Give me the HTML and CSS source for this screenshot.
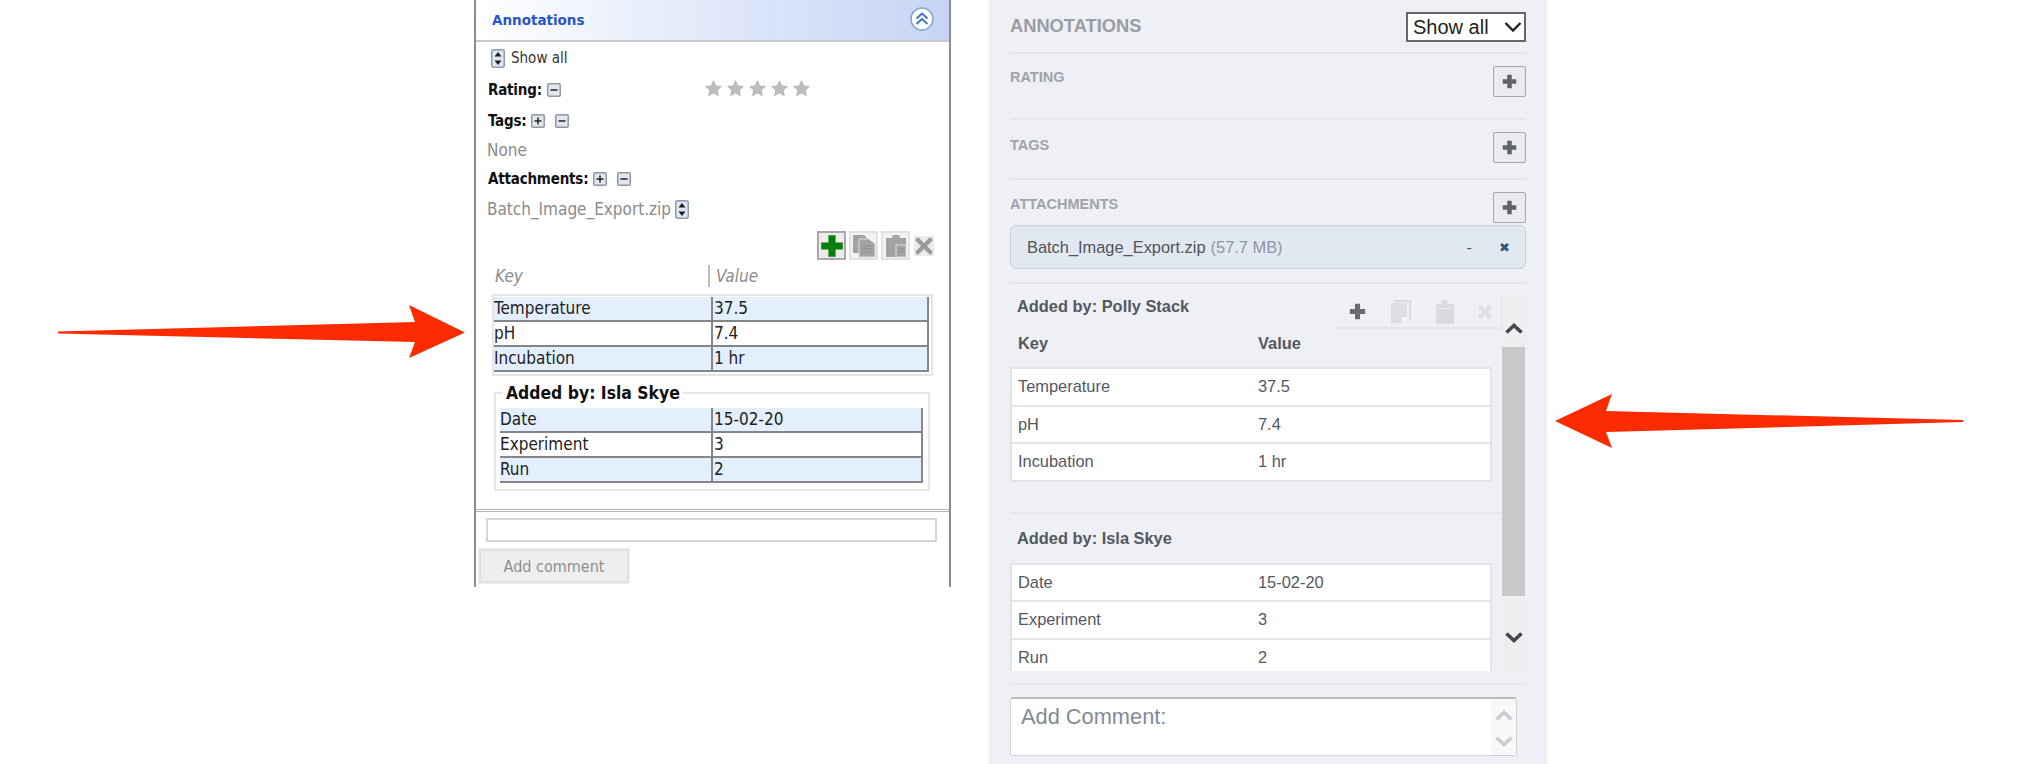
FILE: index.html
```html
<!DOCTYPE html>
<html lang="en">
<head>
  <meta charset="UTF-8" />
  <title>Annotations comparison</title>
  <link rel="stylesheet" href="styles.css">
</head>
<body>
  <svg class="sprite" aria-hidden="true">
    <symbol id="spin" viewBox="0 0 14 19">
      <rect x="0.75" y="0.75" width="12.5" height="17.5" rx="2" fill="#dfe6f0" stroke="#8d9bb0" stroke-width="1.5"/>
      <path d="M7 3l3.5 4.5h-7zM7 16l-3.5-4.5h7z" fill="#1c1c1c"/>
    </symbol>
    <symbol id="box-plus" viewBox="0 0 14 14">
      <rect x="0.75" y="0.75" width="12.5" height="12.5" rx="1.5" fill="#e3e6ec" stroke="#8d97a5" stroke-width="1.5"/>
      <path d="M3.5 7h7M7 3.5v7" stroke="#222" stroke-width="1.5"/>
    </symbol>
    <symbol id="box-minus" viewBox="0 0 14 14">
      <rect x="0.75" y="0.75" width="12.5" height="12.5" rx="1.5" fill="#e3e6ec" stroke="#8d97a5" stroke-width="1.5"/>
      <path d="M3.5 7h7" stroke="#222" stroke-width="1.5"/>
    </symbol>
    <symbol id="star" viewBox="0 0 24 24">
      <path d="M12 1l3.3 7.3 7.700.8-5.800 5.200 1.700 7.800L12 18.100l-6.900 4 1.700-7.800L1 9.100l7.700-.8z" fill="#bdbdbd" stroke="#a9a9a9"/>
    </symbol>
    <symbol id="fat-plus" viewBox="0 0 20 20">
      <path d="M7 1h6v6h6v6h-6v6H7v-6H1V7h6z"/>
    </symbol>
    <symbol id="fat-x" viewBox="0 0 20 20">
      <path d="M4 1l6 6 6-6 3 3-6 6 6 6-3 3-6-6-6 6-3-3 6-6-6-6z"/>
    </symbol>
    <symbol id="docs" viewBox="0 0 24 24">
      <path d="M1 1h11l4 4v14H1z" fill="#a3a3a3"/>
      <path d="M7 5h10l6 5v13H7z" fill="#a3a3a3" stroke="#dcdcdc"/>
      <path d="M10 12h10M10 15h10M10 18h10" stroke="#8c8c8c"/>
    </symbol>
    <symbol id="clip" viewBox="0 0 24 24">
      <path d="M2 4h6l1-3h6l1 3h6v19H2z" fill="#a3a3a3"/>
      <path d="M12 11h10v12H12z" fill="#a3a3a3" stroke="#dcdcdc"/>
      <path d="M14 15h6M14 18h6" stroke="#8c8c8c"/>
    </symbol>
    <symbol id="chev-up" viewBox="0 0 18 12">
      <path d="M1.500 10.500L9 3.500l7.500 7" fill="none" stroke="currentColor" stroke-width="3.600"/>
    </symbol>
    <symbol id="chev-down" viewBox="0 0 18 12">
      <path d="M1.500 1.500L9 8.500l7.500-7" fill="none" stroke="currentColor" stroke-width="3.600"/>
    </symbol>
  </svg>

  <section class="old-panel">
    <header class="old-head">
      <span class="old-title">Annotations</span>
      <span class="collapse">
        <svg viewBox="0 0 24 24" width="24" height="24">
          <circle cx="12" cy="12" r="11" fill="#fff" stroke="#8aa3cc" stroke-width="1.500"/>
          <path d="M6.500 11.500L12 6.500l5.500 5M6.500 17L12 12l5.500 5" fill="none" stroke="#3f6fc0" stroke-width="1.800"/>
        </svg>
      </span>
    </header>

    <div class="old-row old-show"><svg class="spin"><use href="#spin"/></svg><span>Show all</span></div>
    <div class="old-row old-rating">
      <div class="old-label"><b>Rating:</b><svg class="mini"><use href="#box-minus"/></svg></div>
      <div class="stars">
        <svg><use href="#star"/></svg><svg><use href="#star"/></svg><svg><use href="#star"/></svg><svg><use href="#star"/></svg><svg><use href="#star"/></svg>
      </div>
    </div>
    <div class="old-row old-tags old-label"><b>Tags:</b><svg class="mini"><use href="#box-plus"/></svg><svg class="mini"><use href="#box-minus"/></svg></div>
    <div class="old-row old-none">None</div>
    <div class="old-row old-att old-label"><b>Attachments:</b><svg class="mini"><use href="#box-plus"/></svg><svg class="mini"><use href="#box-minus"/></svg></div>
    <div class="old-row old-file">Batch_Image_Export.zip<svg class="spin"><use href="#spin"/></svg></div>

    <div class="old-tools">
      <span class="old-tool active"><svg><use href="#fat-plus"/></svg></span>
      <span class="old-tool"><svg><use href="#docs"/></svg></span>
      <span class="old-tool"><svg><use href="#clip"/></svg></span>
      <span class="old-tool plain"><svg><use href="#fat-x"/></svg></span>
    </div>

    <div class="old-cols"><span class="col-key">Key</span><span class="col-val">Value</span></div>

    <div class="old-frame">
      <table class="old-table">
        <tr><td>Temperature</td><td>37.5</td></tr>
        <tr><td>pH</td><td>7.4</td></tr>
        <tr><td>Incubation</td><td>1 hr</td></tr>
      </table>
    </div>

    <fieldset class="old-field">
      <legend>Added by: Isla Skye</legend>
      <table class="old-table">
        <tr><td>Date</td><td>15-02-20</td></tr>
        <tr><td>Experiment</td><td>3</td></tr>
        <tr><td>Run</td><td>2</td></tr>
      </table>
    </fieldset>

    <div class="old-rule"></div>
    <input class="old-input" type="text" />
    <button class="old-btn" type="button">Add comment</button>
  </section>

  <section class="new-panel">
    <header class="new-head">
      <h2>Annotations</h2>
      <div class="fake-select">Show all<svg width="18" height="12" viewBox="0 0 18 12"><path d="M1.500 2L9 9.500 16.500 2" fill="none" stroke="#222" stroke-width="2.400"/></svg></div>
    </header>

    <div class="new-sec sec-rating">
      <h3>Rating</h3>
      <button class="plus-btn" type="button"><svg><use href="#fat-plus"/></svg></button>
    </div>
    <div class="new-sec sec-tags">
      <h3>Tags</h3>
      <button class="plus-btn" type="button"><svg><use href="#fat-plus"/></svg></button>
    </div>
    <div class="new-sec sec-att">
      <div class="att-top">
        <h3>Attachments</h3>
        <button class="plus-btn" type="button"><svg><use href="#fat-plus"/></svg></button>
      </div>
      <div class="chip">
        <span class="chip-name">Batch_Image_Export.zip</span>
        <span class="chip-size">(57.7 MB)</span>
        <span class="chip-min">-</span>
        <span class="chip-del">&#10006;</span>
      </div>
    </div>

    <div class="scroller">
      <div class="scroll-body">
        <div class="group-head">
          <h4>Added by: Polly Stack</h4>
          <div class="new-tools">
            <svg class="t-plus"><use href="#fat-plus"/></svg>
            <svg class="t-doc" viewBox="0 0 20 24"><path d="M3 0h17v20h-2V2H3z" fill="#d9dbdf"/><path d="M0 3h16v14l-5 6H0z" fill="#dcdee2"/><path d="M11 23l5-6h-5z" fill="#f6f7f9"/></svg>
            <svg class="t-clip" viewBox="0 0 18 24"><path d="M0 4h5l2-4h4l2 4h5v20H0z" fill="#d9dbdf"/><path d="M2 8h14v1H2z" fill="#eceef1"/></svg>
            <svg class="t-x"><use href="#fat-x"/></svg>
          </div>
        </div>
        <div class="kv-cols"><span>Key</span><span>Value</span></div>
        <table class="kv-table">
          <tr><td>Temperature</td><td>37.5</td></tr>
          <tr><td>pH</td><td>7.4</td></tr>
          <tr><td>Incubation</td><td>1 hr</td></tr>
        </table>
        <div class="group-rule"></div>
        <h4 class="group-two">Added by: Isla Skye</h4>
        <table class="kv-table cut">
          <tr><td>Date</td><td>15-02-20</td></tr>
          <tr><td>Experiment</td><td>3</td></tr>
          <tr><td>Run</td><td>2</td></tr>
        </table>
      </div>
      <div class="scrollbar">
        <svg class="bar-up"><use href="#chev-up"/></svg>
        <div class="thumb"></div>
        <svg class="bar-down"><use href="#chev-down"/></svg>
      </div>
    </div>

    <div class="comment-rule"></div>
    <div class="comment">
      <span class="comment-text">Add Comment:</span>
      <div class="comment-bar">
        <svg><use href="#chev-up"/></svg>
        <svg><use href="#chev-down"/></svg>
      </div>
    </div>
  </section>

  <!-- the two red arrows lie over the page -->
  <svg class="arrow arrow-left" viewBox="0 0 410 56"><path d="M0 26.500L357 17 351 0 407 27.500 351 53 357 37 0 28.500z"/></svg>
  <svg class="arrow arrow-right" viewBox="0 0 410 56"><path d="M408 26L51 17 57 0 0 27 57 54 51 38 408 28z"/></svg>
</body>
</html>
```

FILE: styles.css
```css
html, body {
  margin: 0;
  height: 764px;
  overflow: hidden;
  background: #fff;
}
body {
  display: flex;
  align-items: flex-start;
  padding-left: 474px;
  gap: 38px;
  position: relative;
}
.sprite {
  position: absolute;
  width: 0;
  height: 0;
}

/* left: old panel */
.old-panel {
  box-sizing: border-box;
  width: 477px;
  height: 587px;
  border-left: 2px solid #8b8b94;
  border-right: 2px solid #8b8b94;
  font-family: "DejaVu Sans", sans-serif;
  font-stretch: condensed;
  font-size: 17px;
  color: #333;
}
.old-head {
  height: 40px;
  border-bottom: 2px solid #c9c9c9;
  background: linear-gradient(to right, #fff 0%, #e6edfb 40%, #c6d5f5 100%);
  display: flex;
  align-items: center;
  justify-content: space-between;
  padding: 0 15px 0 16px;
}
.old-title {
  color: #2b55c4;
  font-weight: bold;
  font-size: 13.500px;
  font-stretch: normal;
}
.collapse {
  display: flex;
  margin-top: -2px;
}
.old-row {
  display: flex;
  align-items: center;
  padding-left: 11px;
}
.old-row b {
  color: #111;
  font-size: 15px;
  letter-spacing: -0.2px;
  padding-left: 1px;
}
.spin {
  width: 14px;
  height: 19px;
  flex: none;
}
.mini {
  width: 14px;
  height: 14px;
  flex: none;
}
.old-show {
  height: 32px;
  padding-left: 15px;
  gap: 6px;
  font-size: 15px;
}
.old-rating {
  height: 32px;
}
.old-label {
  display: flex;
  align-items: center;
  gap: 5px;
}
.old-rating .old-label {
  width: 218px;
}
.stars {
  display: flex;
  gap: 5px;
  margin-top: -4px;
}
.stars svg {
  width: 17px;
  height: 17px;
}
.old-tags {
  height: 30px;
}
.old-tags .mini + .mini,
.old-att .mini + .mini {
  margin-left: 5px;
}
.old-none {
  height: 28px;
  color: #8b8b8b;
}
.old-att {
  height: 30px;
}
.old-file {
  height: 30px;
  color: #8b8b8b;
  gap: 4px;
}
.old-tools {
  display: flex;
  justify-content: flex-end;
  align-items: center;
  gap: 3px;
  margin-top: 7px;
  padding-right: 15px;
  height: 29px;
}
.old-tool {
  box-sizing: border-box;
  width: 29px;
  height: 29px;
  border: 2px solid #e2e2e2;
  background: #f2f2f2;
  display: flex;
  align-items: center;
  justify-content: center;
  fill: #a0a0a0;
}
.old-tool svg {
  width: 24px;
  height: 24px;
}
.old-tool.active {
  border-color: #a9a9a9;
  background: #ececec;
  fill: #0b7d0b;
}
.old-tool.plain {
  border: 0;
  width: 20px;
  height: 20px;
  margin-left: 1px;
  background: #ececec;
  fill: #9a9a9a;
}
.old-tool.plain svg {
  width: 20px;
  height: 20px;
}
.old-cols {
  display: flex;
  align-items: center;
  height: 22px;
  margin-top: 5px;
  font-style: italic;
  color: #8b8b8b;
}
.col-key {
  box-sizing: border-box;
  width: 234px;
  padding-left: 19px;
  border-right: 2px solid #bbb;
  line-height: 22px;
}
.col-val {
  padding-left: 6px;
}
.old-frame {
  box-sizing: border-box;
  width: 441px;
  height: 82px;
  margin: 7px 0 0 16px;
  padding: 1px 2px 0 0;
  border: 2px solid #e6e6e6;
}
.old-table {
  border-collapse: collapse;
  width: 100%;
  font-size: 17px;
  color: #222;
  border-right: 2px solid #85858c;
}
.old-table td {
  padding: 0;
  height: 23px;
  line-height: 23px;
  border-bottom: 2px solid #85858c;
}
.old-table td:first-child {
  width: 217px;
  border-right: 2px solid #85858c;
}
.old-table td:last-child {
  padding-left: 1px;
}
.old-table tr:nth-child(odd) {
  background: #e3effd;
}
.old-field {
  box-sizing: border-box;
  width: 436px;
  height: 110px;
  margin: 5px 0 0 18px;
  padding: 3px 5px 0 4px;
  border: 2px solid #e6e6e6;
  min-width: 0;
}
.old-field legend {
  margin-left: 3px;
  padding: 0 3px;
  line-height: 24px;
  font-weight: bold;
  font-size: 17.400px;
  color: #111;
}
.old-field td:first-child {
  width: 211px;
}
.old-rule {
  height: 0;
  margin-top: 18px;
  border-top: 3px double #b5b5b5;
}
.old-input {
  box-sizing: border-box;
  display: block;
  width: 451px;
  height: 24px;
  margin: 6px 0 0 10px;
  border: 2px solid #d6d6d6;
  background: #fff;
}
.old-btn {
  box-sizing: border-box;
  display: block;
  width: 150px;
  height: 34px;
  margin: 7px 0 0 3px;
  border: 2px solid #e0e0e0;
  outline: 1px solid #f0f0f0;
  background: #eee;
  font: inherit;
  font-size: 16px;
  color: #8f8f8f;
}

/* right: new panel */
.new-panel {
  box-sizing: border-box;
  width: 558px;
  height: 764px;
  padding: 0 21px;
  background: #eef0f5;
  font-family: "Liberation Sans", Arial, sans-serif;
  color: #54585f;
}
.new-head {
  box-sizing: border-box;
  height: 54px;
  display: flex;
  align-items: flex-start;
  justify-content: space-between;
  padding-top: 12px;
}
.new-head h2 {
  margin: 2px 0 0;
  font-size: 18.300px;
  line-height: 24px;
  text-transform: uppercase;
  color: #9a9da4;
}
.fake-select {
  box-sizing: border-box;
  width: 120px;
  height: 30px;
  padding: 0 2px 0 5px;
  border: 2px solid #666;
  background: #fff;
  color: #222;
  font-size: 20px;
  display: flex;
  align-items: center;
  justify-content: space-between;
}
.new-head,
.new-sec {
  border-bottom: 2px solid #e6e8ec;
}
.new-sec {
  box-sizing: border-box;
  display: flex;
  justify-content: space-between;
  align-items: flex-start;
}
.new-sec h3 {
  margin: 0;
  font-size: 14.500px;
  line-height: 18px;
  text-transform: uppercase;
  color: #a0a3a9;
}
.sec-rating {
  height: 66px;
  padding-top: 12px;
}
.sec-rating h3 {
  margin-top: 2px;
}
.sec-tags {
  height: 60px;
  padding-top: 12px;
}
.sec-tags h3 {
  margin-top: 4px;
}
.sec-att {
  height: 104px;
  padding-top: 12px;
  display: block;
}
.att-top {
  display: flex;
  justify-content: space-between;
  align-items: flex-start;
}
.att-top h3 {
  margin-top: 3px;
}
.plus-btn {
  box-sizing: border-box;
  width: 33px;
  height: 31px;
  padding: 0;
  border: 1px solid #a3a6ab;
  border-radius: 2px;
  background: #e9ebef;
  display: flex;
  align-items: center;
  justify-content: center;
}
.plus-btn svg {
  width: 15px;
  height: 15px;
  fill: #5f6368;
}
.chip {
  box-sizing: border-box;
  display: flex;
  align-items: center;
  height: 44px;
  margin-top: 2px;
  padding-left: 16px;
  border: 1px solid #c8d1db;
  border-radius: 6px;
  background: #e2e8ef;
  font-size: 16.400px;
}
.chip-name {
  color: #50545b;
}
.chip-size {
  margin-left: 5px;
  color: #8d98a6;
}
.chip-min {
  margin-left: auto;
  color: #555;
}
.chip-del {
  width: 24px;
  margin: 0 9px 0 20px;
  text-align: center;
  font-size: 13px;
  color: #34557c;
}
.scroller {
  display: flex;
  height: 387px;
  margin-right: 1px;
}
.scroll-body {
  box-sizing: border-box;
  width: 492px;
  height: 387px;
  overflow: hidden;
}
.group-head {
  display: flex;
  justify-content: space-between;
  height: 44px;
}
.group-head h4,
.group-two {
  margin: 12px 0 0 7px;
  font-size: 16.400px;
  line-height: 20px;
}
.new-tools {
  box-sizing: border-box;
  display: flex;
  align-items: center;
  width: 166px;
  height: 33px;
  margin-top: 12px;
  padding-left: 13px;
  border-right: 1px solid #e2e4e8;
  border-bottom: 2px solid #e4e6ea;
}
.t-plus {
  width: 17px;
  height: 17px;
  fill: #686c72;
}
.t-doc {
  width: 20px;
  height: 24px;
  margin-left: 25px;
}
.t-clip {
  width: 18px;
  height: 24px;
  margin-left: 25px;
}
.t-x {
  width: 16px;
  height: 16px;
  margin-left: 23px;
  fill: #dcdee2;
}
.kv-cols {
  display: grid;
  grid-template-columns: 240px 1fr;
  height: 34px;
  padding-left: 8px;
  box-sizing: border-box;
  font-weight: bold;
  font-size: 16.400px;
  line-height: 20px;
  margin-top: 5px;
}
.kv-table {
  box-sizing: border-box;
  width: 482px;
  border-collapse: collapse;
  background: #fff;
  font-size: 16.400px;
  border: 2px solid #e2e4e8;
}
.kv-table td {
  height: 35.500px;
  padding: 0 0 0 6px;
  border-bottom: 2px solid #e2e4e8;
}
.kv-table td:first-child {
  width: 234px;
}
.kv-table tr:last-child td {
  border-bottom: 0;
}
.group-rule {
  height: 0;
  margin-top: 30px;
  border-top: 2px solid #e6e8ec;
}
.group-two {
  margin-top: 14px;
}
.kv-table.cut {
  margin-top: 15px;
  border-bottom: 0;
}
.scrollbar {
  position: relative;
  width: 23px;
  margin-top: 12px;
  height: 375px;
  background: #eeeeee;
  color: #44484e;
}
.thumb {
  position: absolute;
  top: 51px;
  left: 0;
  right: 0;
  height: 249px;
  background: #c8c8c8;
}
.scrollbar svg {
  position: absolute;
  left: 3px;
  width: 18px;
  height: 12px;
}
.bar-up {
  top: 26px;
}
.bar-down {
  top: 336px;
}
.comment-rule {
  margin-top: 12px;
  border-top: 2px solid #e6e8ec;
}
.comment {
  box-sizing: border-box;
  display: flex;
  justify-content: space-between;
  width: 507px;
  height: 59px;
  margin-top: 12px;
  border: 1px solid #d2d4d8;
  border-top: 2px solid #b9bcc1;
  border-radius: 3px;
  background: #fff;
}
.comment-text {
  padding: 5px 0 0 10px;
  font-size: 21.800px;
  line-height: 26px;
  color: #828a94;
}
.comment-bar {
  width: 25px;
  background: #f8f8f8;
  color: #c9ccd0;
  display: flex;
  flex-direction: column;
  align-items: center;
  gap: 15px;
  padding-top: 10px;
  box-sizing: border-box;
}
.comment-bar svg {
  width: 18px;
  height: 12px;
}

/* arrows */
.arrow {
  position: absolute;
  width: 410px;
  height: 56px;
  fill: #fb2b00;
}
.arrow-left {
  left: 58px;
  top: 305px;
}
.arrow-right {
  left: 1555px;
  top: 394px;
}
```
